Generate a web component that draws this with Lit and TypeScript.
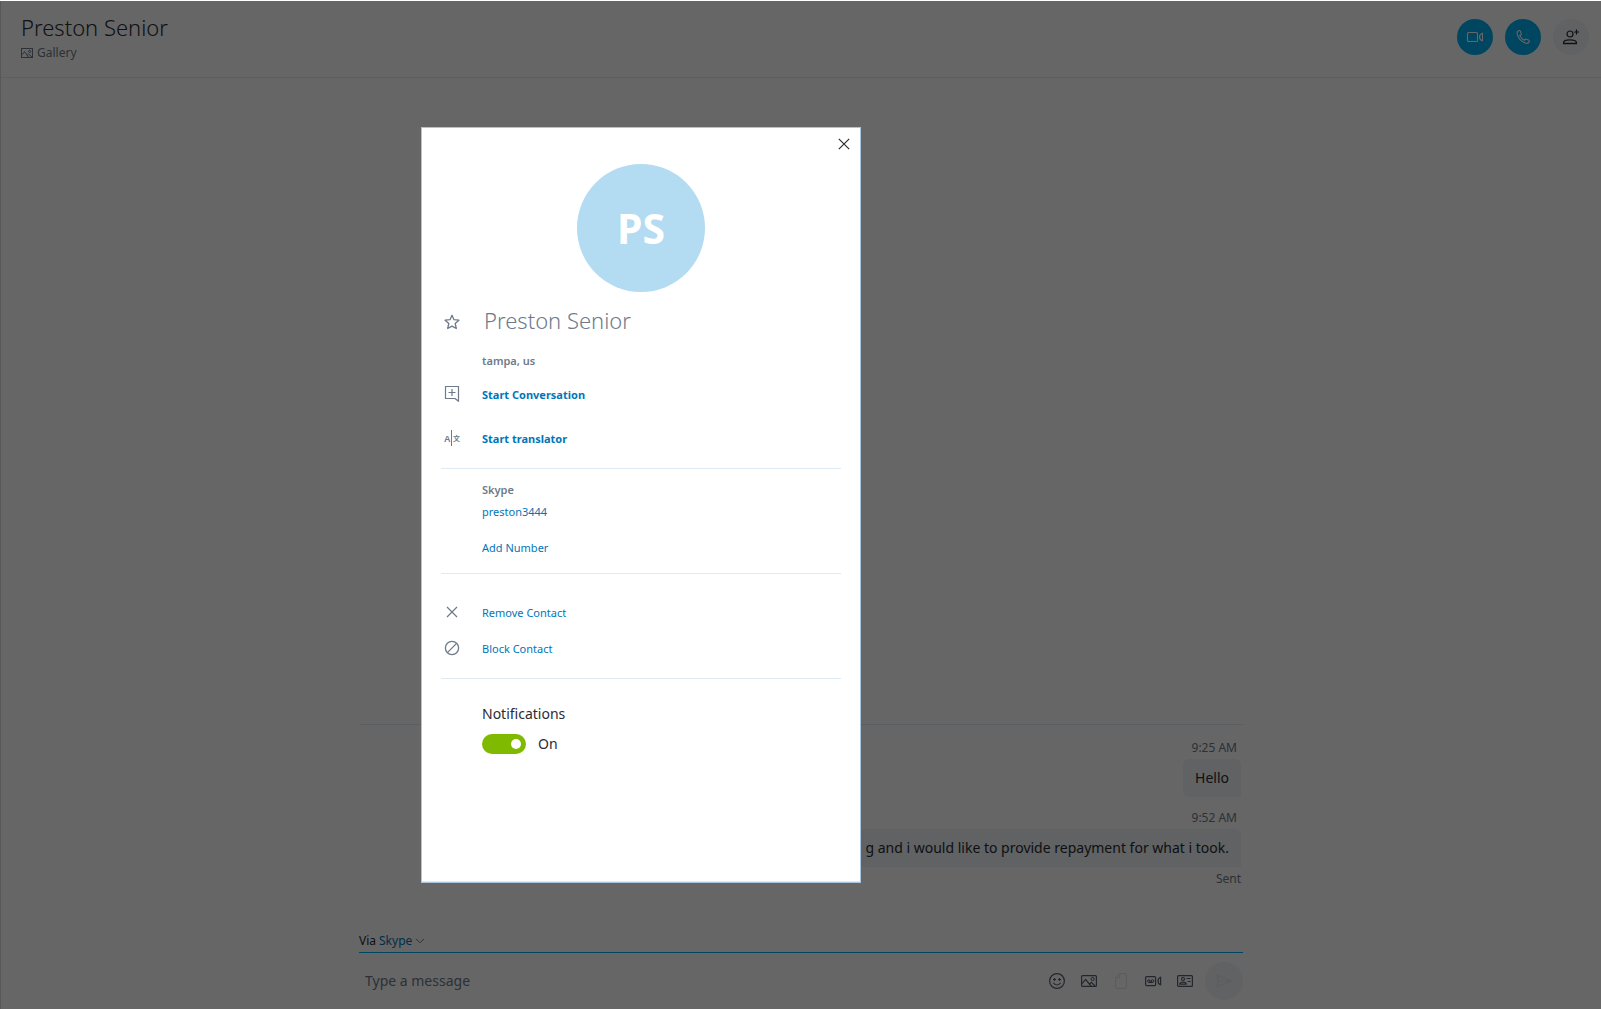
import { LitElement, html, css, svg } from "lit";
import { customElement, state } from "lit/decorators.js";

const icon = (w: number, h: number, body: unknown) => html`<svg
  class="icon"
  width=${w}
  height=${h}
  viewBox="0 0 ${w} ${h}"
  fill="none"
  stroke="currentColor"
  aria-hidden="true"
>${body}</svg>`;

const icons = {
  picture: icon(16, 12, svg`<rect x=".6" y=".6" width="14.8" height="10.8" rx="1" stroke-width="1.2"/><path d="M1 8.6 4.6 4.4 10 11M8.6 9.2 10.4 7.4 14 11" stroke-width="1.2"/><circle cx="11.6" cy="4" r="1.6"/>`),
  gallery: icon(12, 10, svg`<rect x=".5" y=".5" width="11" height="9"/><path d="M1 6.8 3.6 3.6 7.4 9M6.4 7 7.6 6 11 9"/><circle cx="8.7" cy="3.4" r="1.1"/>`),
  video: icon(18, 12, svg`<rect x="1.500" y="1.500" width="10" height="9" rx="1" stroke-width="1.100"/><path d="M16.500 2.200v7.600C14.700 9.200 13.500 7.800 13.500 6s1.200-3.200 3-3.800Z" stroke-width="1.100"/>`),
  phone: icon(16, 16, svg`<path d="M3.400 1.700C4.300 1.200 5.200 1.500 5.500 2.400L6.200 4.800C6.400 5.600 5.900 6.200 5.200 6.500 5.500 8.300 7.600 10.600 9.500 11 9.900 10.300 10.500 10 11.200 10.200L13.500 11.100C14.300 11.500 14.500 12.300 14 13.100 13.200 14.300 11.700 14.700 10.100 14 6.200 12.300 3 8.600 2.200 4.900 1.900 3.400 2.200 2.300 3.400 1.700ZM5.200 6.500 4.200 7M9.500 11 9 12" stroke-width="1.100"/>`),
  addPerson: icon(18, 16, svg`<circle cx="8" cy="5" r="3" stroke-width="1.200"/><path d="M1.600 14.500v-.9c0-1.700 2.800-2.700 6.400-2.700s6.400 1 6.400 2.700v.9Z" stroke-width="1.300"/><path d="M14.500.5v5M12 3h5" stroke-width="1.200"/>`),
  close: icon(12, 12, svg`<path d="M.8.8 11.200 11.200M11.200.8.8 11.200" stroke-width="1.200"/>`),
  star: icon(16, 20, svg`<path transform="translate(0 4)" d="M8 1.300 10 5.700 14.900 6.200 11.200 9.500 12.300 14.500 8 12.100 3.700 14.500 4.800 9.500 1.100 6.200 6 5.700Z" stroke-width="1.300" stroke-linejoin="round"/>`),
  chat: icon(16, 18, svg`<path d="M1.500 1.500h13v14.800L11 13.500H1.500ZM8 4v7M4.500 7.500h7" stroke-width="1.200" stroke-linejoin="round"/>`),
  translate: icon(16, 16, svg`<path d="M7.500 0v16"/><g fill="currentColor" stroke="none"><text class="glyph" x="0" y="12">A</text><text class="glyph small" x="9" y="11">文</text></g>`),
  remove: icon(12, 12, svg`<path d="M1 1 11 11M11 1 1 11" stroke-width="1.200"/>`),
  block: icon(16, 16, svg`<circle cx="8" cy="8" r="6.600" stroke-width="1.300"/><path d="M3.400 12.600 12.600 3.400" stroke-width="1.300"/>`),
  chevron: icon(10, 6, svg`<path d="M1 .8 5 4.800 9 .8"/>`),
  smile: icon(18, 18, svg`<circle cx="9" cy="9" r="7.400" stroke-width="1.200"/><path d="M5.400 10.800C6.200 12.200 7.400 13 9 13s2.800-.8 3.600-2.200M6.500 6v3M5 7.500h3M11.500 6v3M10 7.500h3" stroke-width="1.100"/>`),
  file: icon(14, 18, svg`<path d="M5.600 1.600H11a1.400 1.400 0 0 1 1.400 1.400V15a1.400 1.400 0 0 1-1.400 1.400H3A1.400 1.400 0 0 1 1.600 15V5.600ZM5.600 1.600v4h-4"/>`),
  videoMessage: icon(18, 12, svg`<rect x="1.600" y="1.600" width="10" height="9" rx="1" stroke-width="1.200"/><circle cx="4.900" cy="6" r="1.300"/><circle cx="8.600" cy="6" r="1.300"/><path d="M4.900 7.400H8.600M16.600 2.200v7.600C15 9.200 14 7.800 14 6s1-3.200 2.600-3.800Z" stroke-width="1.200"/>`),
  card: icon(16, 12, svg`<rect x=".6" y=".6" width="14.800" height="10.800" rx="1" stroke-width="1.200"/><circle cx="6" cy="4" r="1.500" stroke-width="1.200"/><path d="M2.800 9.200C2.800 7.800 4 7.200 6 7.200s3.200.6 3.200 2ZM9.600 3.500h4M10.600 6.500h3" stroke-width="1.200"/>`),
  send: icon(18, 14, svg`<path d="M2 1.200 16.400 7 2 12.800 3.400 7ZM3.400 7H16" stroke-width="1.200" stroke-linejoin="round"/>`),
};

const base = css`
  * { box-sizing: border-box; }
  button, input, select {
    margin: 0;
    padding: 0;
    border: 0;
    background: none;
    font: inherit;
    color: inherit;
  }
  button, select { cursor: pointer; }
  .icon { display: block; flex: none; }
`;

@customElement("chat-header")
class ChatHeader extends LitElement {
  static styles = [base, css`
    :host {
      display: flex;
      justify-content: space-between;
      align-items: flex-start;
      padding: 12px 12px 12px 20px;
      height: 77px;
      flex: none;
      box-sizing: border-box;
      border-bottom: 1px solid #e6ecef;
    }
    h1 { margin: 0; font-size: 22px; line-height: 28px; font-weight: 300; }
    .gallery {
      display: flex;
      align-items: center;
      gap: 4px;
      font-size: 12px;
      line-height: 24px;
      color: #6e7a8a;
    }
    .actions { display: flex; gap: 12px; padding-top: 6px; }
    .round {
      display: grid;
      place-items: center;
      width: 36px;
      height: 36px;
      border-radius: 50%;
      background: #00aff0;
      color: #fff;
    }
    .plain { background: #f1f4f8; color: #2b2c33; }
  `];
  render() {
    return html`
      <div>
        <h1>Preston Senior</h1>
        <button class="gallery">${icons.gallery}Gallery</button>
      </div>
      <div class="actions">
        <button class="round" aria-label="Video call">${icons.video}</button>
        <button class="round" aria-label="Audio call">${icons.phone}</button>
        <button class="round plain" aria-label="Add people">${icons.addPerson}</button>
      </div>`;
  }
}

@customElement("message-list")
class MessageList extends LitElement {
  static styles = [base, css`
    :host {
      display: flex;
      flex-direction: column;
      align-items: flex-end;
      padding: 2px 2px 0 0;
      border-top: 1px solid #dfeef5;
    }
    time, .status { font-size: 12px; line-height: 20px; color: #6e7a8a; }
    time { margin: 11px 4px 1px 0; }
    .bubble {
      margin: 0;
      padding: 8px 12px;
      border-radius: 6px 6px 0 6px;
      background: #f0f4f8;
      font-size: 14px;
      line-height: 22px;
    }
    .status { margin-top: 2px; }
  `];
  private messages = [
    { time: "9:25 AM", text: "Hello" },
    { time: "9:52 AM", text: "g and i would like to provide repayment for what i took." },
  ];
  render() {
    return html`
      ${this.messages.map((m) => html`<time>${m.time}</time><p class="bubble">${m.text}</p>`)}
      <span class="status">Sent</span>`;
  }
}

@customElement("message-composer")
class MessageComposer extends LitElement {
  static styles = [base, css`
    :host { display: block; }
    .via {
      display: flex;
      align-items: center;
      gap: 3px;
      padding-bottom: 1px;
      font-size: 12px;
      line-height: 20px;
    }
    .via select {
      appearance: none;
      field-sizing: content;
      color: #0076b8;
    }
    .row {
      display: flex;
      align-items: center;
      gap: 14px;
      padding: 9px 0;
      border-top: 1px solid #00aff0;
    }
    .field {
      flex: 1;
      min-width: 0;
      padding-left: 6px;
      font-size: 14px;
      line-height: 22px;
      outline: none;
    }
    .field::placeholder { color: #6e7a8a; opacity: 1; }
    .tool {
      display: grid;
      place-items: center;
      width: 18px;
      height: 18px;
      color: #5a6070;
    }
    .faint { color: #dde4ea; }
    .send {
      display: grid;
      place-items: center;
      width: 38px;
      height: 38px;
      margin-left: -3px;
      border-radius: 50%;
      background: #f1f4f8;
      color: #e2e8ed;
    }
    .chevron { color: #6e7a8a; pointer-events: none; }
  `];
  render() {
    return html`
      <div class="via">
        <label for="via">Via</label>
        <select id="via"><option>Skype</option></select>
        <span class="chevron">${icons.chevron}</span>
      </div>
      <div class="row">
        <input class="field" type="text" placeholder="Type a message" aria-label="Type a message" />
        <button class="tool" aria-label="Emoticons">${icons.smile}</button>
        <button class="tool" aria-label="Add picture">${icons.picture}</button>
        <button class="tool faint" aria-label="Add file">${icons.file}</button>
        <button class="tool" aria-label="Video message">${icons.videoMessage}</button>
        <button class="tool" aria-label="Send contacts">${icons.card}</button>
        <button class="send" aria-label="Send">${icons.send}</button>
      </div>`;
  }
}

@customElement("profile-dialog")
class ProfileDialog extends LitElement {
  static styles = [base, css`
    :host {
      display: flex;
      flex-direction: column;
      box-sizing: border-box;
      padding: 36px 19px 0;
      border: 1px solid #a9c6de;
      background: #fff;
      color: #2b2c33;
      font-size: 11px;
      overflow: auto;
      box-shadow: inset 0 -1px #dfecf6;
    }
    .close {
      position: absolute;
      top: 5px;
      right: 5px;
      display: grid;
      place-items: center;
      width: 22px;
      height: 22px;
    }
    .avatar {
      display: grid;
      place-items: center;
      align-self: center;
      flex: none;
      width: 128px;
      height: 128px;
      margin-bottom: 10px;
      border-radius: 50%;
      background: #b3dbf2;
      color: #fff;
      font-size: 41px;
      font-weight: 700;
    }
    .row {
      display: grid;
      grid-template-columns: 22px 1fr;
      column-gap: 19px;
      align-items: center;
      justify-items: start;
      min-height: 36px;
      color: #6e7a8a;
    }
    .row > .icon { justify-self: center; }
    .row > :not(.icon) { grid-column: 2; }
    .tall { min-height: 44px; }
    .short { min-height: 22px; }
    .place { min-height: 24px; margin-top: 10px; }
    h2 { margin: 0; padding-left: 2px; font-size: 22px; line-height: 30px; font-weight: 300; }
    .strong { font-weight: 700; }
    .semi { font-weight: 600; }
    .link { color: #0076b8; text-align: left; }
    section { border-bottom: 1px solid #dfebf3; }
    .start { padding-bottom: 8px; }
    .accounts { padding: 9px 0 8px; }
    .accounts .number { margin-top: 7px; }
    .manage { padding: 20px 0 12px; }
    .alerts {
      display: flex;
      flex-direction: column;
      gap: 8px;
      padding: 23px 0 23px 41px;
      font-size: 14px;
    }
    .alerts label { line-height: 24px; }
    .toggle { display: flex; align-items: center; gap: 12px; line-height: 20px; }
    .toggle input {
      appearance: none;
      display: flex;
      align-items: center;
      width: 44px;
      height: 20px;
      padding: 0 5px;
      border-radius: 10px;
      background: #9aa4b0;
      cursor: pointer;
    }
    .toggle input::before {
      content: "";
      width: 10px;
      height: 10px;
      border-radius: 50%;
      background: #fff;
    }
    .toggle input:checked { justify-content: flex-end; background: #7fba00; }
    .glyph { font: 700 9px "Liberation Sans", sans-serif; }
    .small { font: 700 7px "Noto Sans CJK SC", sans-serif; }
  `];

  @state() private on = true;

  render() {
    return html`
      <button class="close" aria-label="Close">${icons.close}</button>
      <div class="avatar">PS</div>
      <section class="start">
        <div class="row">${icons.star}<h2>Preston Senior</h2></div>
        <div class="row place"><span class="semi">tampa, us</span></div>
        <div class="row tall">${icons.chat}<button class="link strong">Start Conversation</button></div>
        <div class="row tall">${icons.translate}<button class="link strong">Start translator</button></div>
      </section>
      <section class="accounts">
        <div class="row short"><span class="semi">Skype</span></div>
        <div class="row short"><button class="link">preston3444</button></div>
        <div class="row number"><button class="link">Add Number</button></div>
      </section>
      <section class="manage">
        <div class="row">${icons.remove}<button class="link">Remove Contact</button></div>
        <div class="row">${icons.block}<button class="link">Block Contact</button></div>
      </section>
      <div class="alerts">
        <label for="notify">Notifications</label>
        <div class="toggle">
          <input id="notify" type="checkbox" role="switch" .checked=${this.on}
            @change=${(e: Event) => (this.on = (e.target as HTMLInputElement).checked)} />
          <span>${this.on ? "On" : "Off"}</span>
        </div>
      </div>`;
  }
}

@customElement("app-root")
class AppRoot extends LitElement {
  static styles = css`
    :host {
      display: flex;
      flex-direction: column;
      position: relative;
      box-sizing: border-box;
      min-height: 100vh;
      padding-top: 1px;
      background: #fff;
      color: #2b2c33;
      font-family: "Noto Sans", "Open Sans", sans-serif;
      font-size: 14px;
    }
    .page {
      flex: 1;
      display: flex;
      flex-direction: column;
      border-left: 1px solid #dcdcdc;
    }
    .thread {
      flex: 1;
      display: flex;
      flex-direction: column;
      justify-content: flex-end;
      width: 100%;
      max-width: 884px;
      margin: 0 auto;
    }
    message-composer { margin-top: 42px; }
    .shade { position: absolute; inset: 1px 0 0; background: rgba(0, 0, 0, 0.6); }
    profile-dialog {
      position: absolute;
      top: 127px;
      bottom: 126px;
      left: 421px;
      width: 440px;
    }
  `;
  render() {
    return html`
      <div class="page">
        <chat-header></chat-header>
        <main class="thread">
          <message-list></message-list>
          <message-composer></message-composer>
        </main>
      </div>
      <div class="shade"></div>
      <profile-dialog role="dialog" aria-label="Preston Senior"></profile-dialog>`;
  }
}
